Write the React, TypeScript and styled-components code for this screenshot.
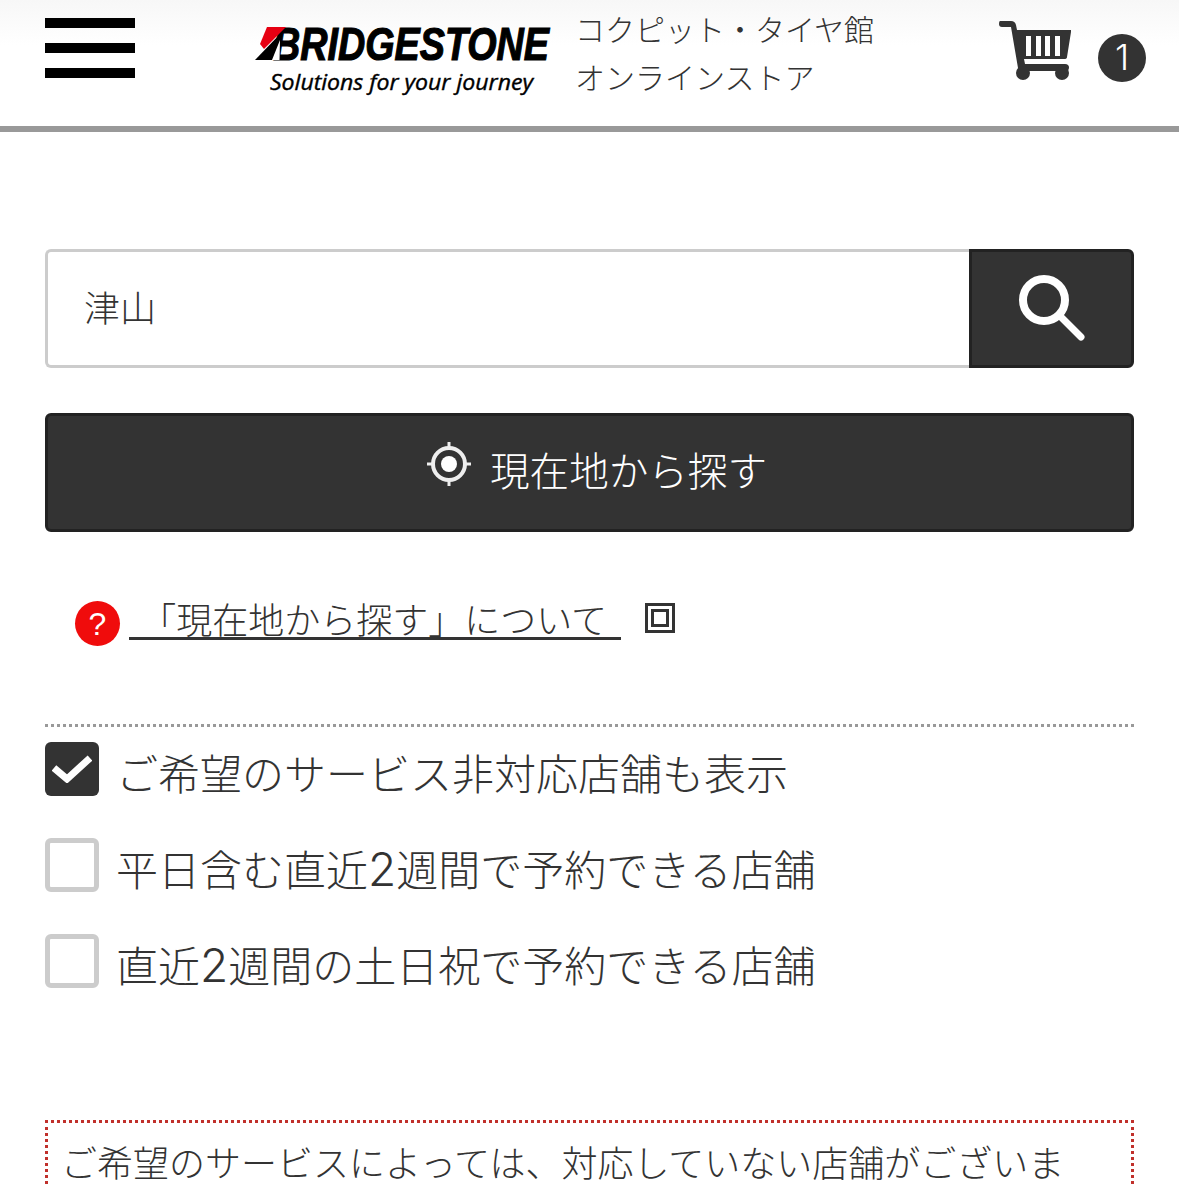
import React from "react";
import styled, { createGlobalStyle } from "styled-components";

const Global = createGlobalStyle`
  html, body { margin: 0; padding: 0; background: #fff; height: 1186px; overflow: hidden; }
  body { font-family: Inter, "Noto Sans CJK JP", "Noto Sans", sans-serif; font-weight: 300; color: #333; }
  * { box-sizing: border-box; }
`;

const Header = styled.header`
  height: 132px;
  border-bottom: 6px solid #999;
  background: linear-gradient(#f7f7f7 0, #fff 45px);
  display: flex;
  align-items: flex-start;
  padding: 18px 33px 0 45px;
`;
const Burger = styled.div`
  width: 90px;
  display: flex;
  flex-direction: column;
  gap: 15px;
`;
const BurgerBar = styled.span`
  display: block;
  height: 10px;
  background: #000;
`;
const LogoWrap = styled.div`
  margin-left: 120px;
  margin-top: 4px;
  width: 296px;
  height: 80px;
`;
const StoreName = styled.div`
  margin-left: 24px;
  margin-top: -12px;
  font-size: 30px;
  line-height: 48px;
  width: 330px;
  color: #333;
`;
const Cart = styled.div`
  margin-left: auto;
  display: flex;
  align-items: flex-start;
  gap: 25px;
  margin-top: 1px;
`;
const CartIcon = styled.svg`
  display: block;
`;
const Badge = styled.div`
  width: 48px;
  height: 48px;
  border-radius: 50%;
  background: #333;
  color: #fff;
  font-size: 36px;
  line-height: 46px;
  text-align: center;
  margin-top: 15px;
`;
const Main = styled.main`
  padding: 117px 45px 0;
`;
const SearchRow = styled.div`
  display: flex;
  height: 119px;
`;
const SearchInput = styled.div`
  flex: 1;
  border: 3px solid #ccc;
  border-right: 0;
  border-radius: 6px 0 0 6px;
  font-size: 36px;
  display: flex;
  align-items: center;
  padding: 0 0 6px 36px;
  color: #333;
`;
const SearchButton = styled.div`
  width: 165px;
  background: #333;
  border: 3px solid #222;
  border-radius: 0 6px 6px 0;
  display: flex;
  align-items: center;
  justify-content: center;
  padding-bottom: 2px;
`;
const LocateButton = styled.div`
  margin-top: 45px;
  height: 119px;
  background: #333;
  border: 3px solid #222;
  border-radius: 6px;
  color: #fff;
  font-size: 39.6px;
  display: flex;
  align-items: center;
  justify-content: center;
  gap: 18px;
  padding: 0 0 8px 14px;
`;
const LocateIcon = styled.svg`
  margin-top: -10px;
`;
const HelpRow = styled.div`
  margin-top: 69px;
  margin-left: 30px;
  display: flex;
  align-items: flex-start;
  height: 45px;
`;
const HelpIcon = styled.div`
  width: 45px;
  height: 45px;
  border-radius: 50%;
  background: #f00c0c;
  color: #fff;
  font-size: 32px;
  line-height: 47px;
  text-align: center;
  font-family: "Liberation Sans", sans-serif;
`;
const HelpLink = styled.a`
  margin-left: 9px;
  padding: 2px 0 0 1px;
  font-size: 36px;
  line-height: 36px;
  color: #333;
  white-space: pre;
  border-bottom: 3px solid #333;
  width: 492px;
  height: 39px;
`;
const ExternalIcon = styled.div`
  margin-left: 24px;
  margin-top: 2px;
  width: 30px;
  height: 30px;
  border: 3px solid #333;
  padding: 3px;
`;
const ExternalInner = styled.div`
  width: 18px;
  height: 18px;
  border: 3px solid #333;
`;
const Divider = styled.div`
  margin-top: 78px;
  border-top: 3px dotted #999;
`;
const Options = styled.div`
  margin-top: 15px;
  display: flex;
  flex-direction: column;
  gap: 42px;
`;
const Option = styled.label`
  display: flex;
  align-items: center;
  height: 54px;
  gap: 19px;
  font-size: 42px;
  white-space: nowrap;
`;
const OptionText = styled.span`
  margin: 4px 0 0 -2px;
`;
const Digit = styled.span`
  font-size: 46px;
  line-height: 1;
`;
const Check = styled.span<{ $on?: boolean }>`
  width: 54px;
  height: 54px;
  flex: none;
  border-radius: 6px;
  border: ${(p) => (p.$on ? "0" : "5px solid #ccc")};
  background: ${(p) => (p.$on ? "#333" : "#fff")};
  display: flex;
  align-items: center;
  justify-content: center;
`;
const Notice = styled.div`
  margin-top: 132px;
  border: 3px dotted #c0302b;
  padding: 14px 13px;
  font-size: 36px;
  line-height: 54px;
`;

export default function App() {
  return (
    <>
      <Global />
      <Header>
        <Burger>
          <BurgerBar />
          <BurgerBar />
          <BurgerBar />
        </Burger>
        <LogoWrap>
          <svg width="296" height="80" viewBox="0 0 296 80">
            <text x="18" y="38" fontFamily="Liberation Sans" fontWeight="700" fontStyle="italic" fontSize="47" textLength="276" lengthAdjust="spacingAndGlyphs" stroke="#000" strokeWidth="1.2" fill="#000">BRIDGESTONE</text>
            <polygon points="12,5 31,5 9,27 5,22" fill="#e60012" />
            <polygon points="0,38 26,11 24,38" fill="#000" />
            <polygon points="17,38 25,18 24.500,38" fill="#fff" />
            <text x="15" y="68" fontFamily="Open Sans" fontWeight="400" fontStyle="italic" fontSize="22" textLength="263" lengthAdjust="spacingAndGlyphs" stroke="#000" strokeWidth="0.4" fill="#000">Solutions for your journey</text>
          </svg>
        </LogoWrap>
        <StoreName>コクピット・タイヤ館<br />オンラインストア</StoreName>
        <Cart>
          <CartIcon width="74" height="62" viewBox="0 0 74 62">
            <path d="M1 2h11q4 0 5 4l1 5h54v2l-4 25q0 2-3 2H25l1 5h40q4 0 4 3.500t-4 3.500H22q-3 0-3-3L12 8H3q-3 0-3-3t1-3z" fill="#333" />
            <circle cx="24" cy="54" r="7" fill="#333" />
            <circle cx="63" cy="54" r="7" fill="#333" />
            <g fill="#fff">
              <rect x="27" y="17" width="5" height="20" />
              <rect x="37" y="17" width="5" height="20" />
              <rect x="46" y="17" width="5" height="20" />
              <rect x="56" y="17" width="5" height="20" />
            </g>
          </CartIcon>
          <Badge>1</Badge>
        </Cart>
      </Header>
      <Main>
        <SearchRow>
          <SearchInput>津山</SearchInput>
          <SearchButton>
            <svg width="68" height="68" viewBox="0 0 68 68" fill="none" stroke="#fff" strokeLinecap="round">
              <circle cx="26" cy="26" r="21" strokeWidth="8" />
              <path d="M42 42l21 21" strokeWidth="7" />
            </svg>
          </SearchButton>
        </SearchRow>
        <LocateButton>
          <LocateIcon width="46" height="46" viewBox="0 0 46 46" fill="none" stroke="#eee">
            <circle cx="23" cy="23" r="16" strokeWidth="4" />
            <circle cx="23" cy="23" r="8" fill="#fff" stroke="none" />
            <path d="M23 1v7M23 38v7M1 23h7M38 23h7" strokeWidth="3" />
          </LocateIcon>
          現在地から探す
        </LocateButton>
        <HelpRow>
          <HelpIcon>?</HelpIcon>
          <HelpLink>{" 「現在地から探す」について"}</HelpLink>
          <ExternalIcon>
            <ExternalInner />
          </ExternalIcon>
        </HelpRow>
        <Divider />
        <Options>
          <Option>
            <Check $on>
              <svg width="40" height="28" viewBox="0 0 40 28" fill="none" stroke="#fff" strokeWidth="7">
                <path d="M2 13l13 11L38 3" />
              </svg>
            </Check>
            <OptionText>ご希望のサービス非対応店舗も表示</OptionText>
          </Option>
          <Option>
            <Check />
            <OptionText>平日含む直近<Digit>2</Digit>週間で予約できる店舗</OptionText>
          </Option>
          <Option>
            <Check />
            <OptionText>直近<Digit>2</Digit>週間の土日祝で予約できる店舗</OptionText>
          </Option>
        </Options>
        <Notice>ご希望のサービスによっては、対応していない店舗がございま</Notice>
      </Main>
    </>
  );
}
